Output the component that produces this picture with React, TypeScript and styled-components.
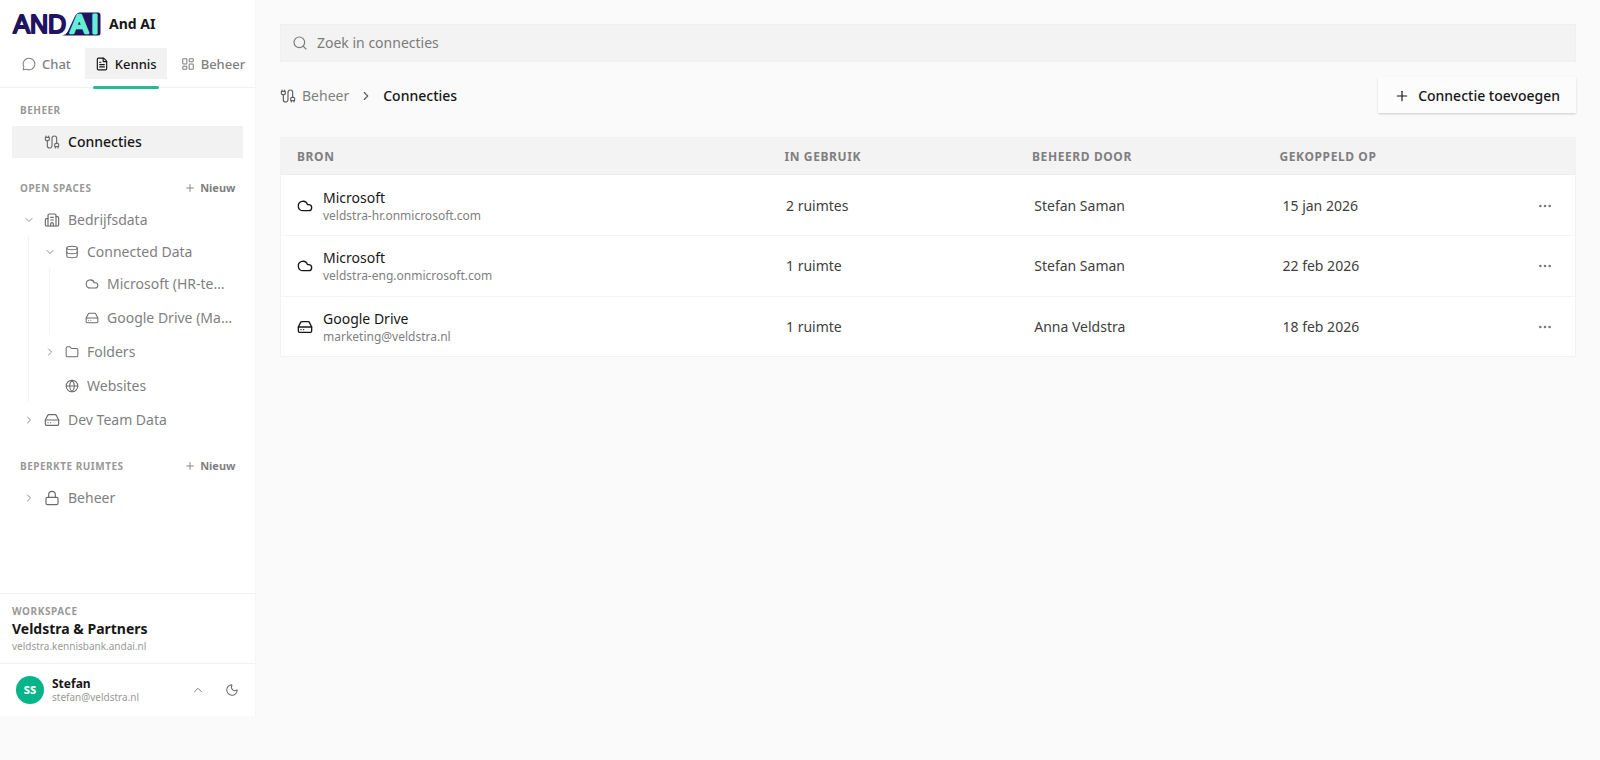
import React from "react";
import styled, { createGlobalStyle } from "styled-components";
import {
  Building2,
  Cable,
  ChevronDown,
  ChevronRight,
  ChevronUp,
  Cloud,
  Database,
  Ellipsis,
  FileText,
  Folder,
  Globe,
  HardDrive,
  LayoutDashboard,
  Lock,
  MessageCircle,
  Moon,
  Plus,
  Search,
  type LucideIcon,
} from "lucide-react";

const GlobalStyle = createGlobalStyle`
  * { box-sizing: border-box; }
  body {
    margin: 0;
    background: #fafafa;
    color: #171717;
    font-family: "Noto Sans", sans-serif;
    font-size: 14px;
    line-height: 20px;
  }
  button { font: inherit; color: inherit; border: 0; background: none; padding: 0; }
  svg { flex-shrink: 0; display: block; }
`;

const Page = styled.div`
  display: flex;
  align-items: flex-start;
  min-height: 760px;
`;

const Sidebar = styled.aside`
  width: 256px;
  height: 716px;
  flex-shrink: 0;
  display: flex;
  flex-direction: column;
  background: #fff;
  border-right: 1px solid #f5f5f5;
`;

const Brand = styled.div`
  display: flex;
  align-items: center;
  gap: 8px;
  height: 48px;
  padding: 0 12px;
  font-weight: 700;
`;

const Tabs = styled.nav`
  display: flex;
  height: 40px;
  padding: 0 0 0 12px;
  gap: 4px;
  border-bottom: 1px solid #f2f2f2;
`;

const Tab = styled.button<{ $active?: boolean }>`
  position: relative;
  display: flex;
  align-items: center;
  gap: 6px;
  height: 31px;
  padding: 0 10px;
  font-size: 13px;
  font-weight: 500;
  white-space: nowrap;
  color: ${(p) => (p.$active ? "#171717" : "#7f7f7f")};
  background: ${(p) => (p.$active ? "#f2f2f2" : "transparent")};
  &::after {
    content: "";
    display: ${(p) => (p.$active ? "block" : "none")};
    position: absolute;
    left: 8px;
    right: 8px;
    bottom: -10px;
    height: 3px;
    border-radius: 2px;
    background: #2bb898;
  }
`;

const Navigation = styled.div`
  flex: 1;
  padding: 12px 12px 0;
`;

const Section = styled.section`
  margin-bottom: 20px;
`;

const SectionHead = styled.div`
  display: flex;
  align-items: center;
  justify-content: space-between;
  height: 20px;
  padding: 0 7.5px 0 8px;
  margin-bottom: 6px;
`;

const Caption = styled.span<{ $wide?: boolean }>`
  font-size: 10px;
  line-height: 16px;
  font-weight: 700;
  letter-spacing: ${(p) => (p.$wide ? 0.55 : 0.5)}px;
  color: #999;
`;

const NewButton = styled.button`
  display: flex;
  align-items: center;
  gap: 4px;
  font-size: 11px;
  font-weight: 700;
  color: #7f7f7f;
`;

const Item = styled.div<{ $active?: boolean }>`
  display: flex;
  align-items: center;
  height: 32px;
  padding: 0 8px;
  font-weight: ${(p) => (p.$active ? 500 : 400)};
  background: ${(p) => (p.$active ? "#f2f2f2" : "transparent")};
  color: ${(p) => (p.$active ? "#171717" : "#7f7f7f")};
  svg { color: #6b6b6b; }
`;

const Toggle = styled.span`
  display: flex;
  flex-shrink: 0;
  justify-content: center;
  width: 18px;
  margin-right: 6px;
  svg { color: #7b7b7b; }
`;

const ItemLabel = styled.span`
  margin-left: 8px;
  white-space: nowrap;
`;

const Branch = styled.div<{ $inset: number }>`
  display: flex;
  flex-direction: column;
  gap: 2px;
  margin-left: 16px;
  padding-left: ${(p) => p.$inset}px;
  border-left: 1px solid #f4f4f4;
`;

const Stack = styled.div`
  display: flex;
  flex-direction: column;
  gap: 2px;
`;

const Workspace = styled.div`
  height: 70px;
  padding: 9px 12px 0;
  border-top: 1px solid #f2f2f2;
`;

const WorkspaceName = styled.div`
  margin-bottom: 1px;
  font-weight: 700;
  line-height: 19px;
`;

const SmallText = styled.div`
  font-size: 10px;
  line-height: 15px;
  color: #999;
`;

const User = styled.div`
  display: flex;
  align-items: center;
  height: 53px;
  padding: 0 16px;
  border-top: 1px solid #f2f2f2;
  svg { color: #6b6b6b; }
`;

const Avatar = styled.div`
  display: grid;
  place-items: center;
  width: 28px;
  height: 28px;
  margin-right: 8px;
  border-radius: 50%;
  background: #05b488;
  color: #fff;
  font-size: 11px;
  font-weight: 800;
`;

const UserInfo = styled.div`
  flex: 1;
  padding-top: 1px;
`;

const UserName = styled.div`
  font-size: 12px;
  line-height: 13px;
  font-weight: 700;
`;

const UserActions = styled.div`
  display: flex;
  align-items: center;
  gap: 20px;
`;

const Main = styled.main`
  flex: 1;
  padding: 24px;
`;

const SearchBox = styled.label`
  display: flex;
  align-items: center;
  gap: 9px;
  height: 38px;
  padding: 0 11px;
  border: 1px solid #f0f0f0;
  background: #f3f3f3;
  color: #7b7b7b;
`;

const Toolbar = styled.div`
  display: flex;
  align-items: center;
  justify-content: space-between;
  height: 36px;
  margin: 15.5px 0 23.5px;
`;

const Crumbs = styled.div`
  display: flex;
  align-items: center;
  color: #7f7f7f;
  svg { color: #5f5f5f; }
`;

const CrumbParent = styled.span`
  margin: 0 10px 0 6px;
`;

const CrumbCurrent = styled.span`
  margin-left: 10px;
  font-weight: 500;
  color: #171717;
`;

const AddButton = styled.button`
  display: flex;
  align-items: center;
  gap: 8px;
  height: 36px;
  padding: 1px 16px 0;
  margin-bottom: 1px;
  font-weight: 500;
  background: #fcfcfc;
  box-shadow: 0 1px 2px rgba(0, 0, 0, 0.14), 0 2px 3px -1px rgba(0, 0, 0, 0.06);
`;

const Table = styled.div`
  border: 1px solid #f2f2f2;
  background: #fff;
`;

const Row = styled.div`
  display: grid;
  grid-template-columns: 487px 248.25px 248.25px 1fr 28px;
  align-items: center;
  height: 60.75px;
  padding: 1px 16px 0;
  border-bottom: 1px solid #f4f4f4;
  color: #404040;
  &:last-child { height: 59.5px; border-bottom: 0; }
`;

const HeadRow = styled(Row)`
  grid-template-columns: 487.5px 247.5px 247.5px 1fr 28px;
  height: 37.35px;
  background: #f3f3f3;
  border-bottom-color: #eee;
  color: #7f7f7f;
  font-size: 12px;
  font-weight: 700;
  letter-spacing: 0.6px;
`;

const Cell = styled.span`
  padding-left: 2px;
`;

const Source = styled.div`
  display: flex;
  align-items: center;
  gap: 10px;
  color: #171717;
`;

const SourceText = styled.div`
  padding-top: 1px;
`;

const SourceName = styled.div`
  line-height: 18px;
`;

const SourceDetail = styled.div`
  font-size: 12px;
  line-height: 17px;
  color: #7f7f7f;
`;

const More = styled.button`
  display: grid;
  place-items: center;
  width: 28px;
  height: 28px;
  color: #7b7b7b;
`;

const LogoMark = styled.svg`
  overflow: visible;
  font-family: "Liberation Sans", sans-serif;
  font-weight: 400;
  line-height: 1;
  stroke-linejoin: round;
  stroke-linecap: round;
`;

const Logo = () => (
  <LogoMark width="89" height="24" viewBox="0 0 89 24" aria-label="AND AI">
    <text x="1.2" y="20.500" fontSize="25" textLength="53" lengthAdjust="spacingAndGlyphs" fill="#20135f" stroke="#20135f" strokeWidth="2">AND</text>
    <path
      d="M68 .5H86Q88.500.5 88.500 3V21Q88.500 23.500 86 23.500H50Q54 23 56 19L63 4Q65 .5 68 .5Z"
      fill="#20135f"
      stroke="#fff"
      strokeWidth="1.200"
      paintOrder="stroke"
    />
    <text x="58.500" y="20.500" fontSize="25" textLength="17.500" lengthAdjust="spacingAndGlyphs" fill="#65eed5" stroke="#65eed5" strokeWidth="2.600">A</text>
    <text x="79.500" y="20.500" fontSize="25" fill="#65eed5" stroke="#65eed5" strokeWidth="2.800">I</text>
  </LogoMark>
);

type TreeItemProps = {
  icon: LucideIcon;
  label: string;
  state?: "open" | "closed";
  active?: boolean;
  size?: number;
};

const TreeItem = ({ icon: Icon, label, state, active, size = 16 }: TreeItemProps) => (
  <Item $active={active}>
    <Toggle>
      {state === "open" && <ChevronDown size={12} strokeWidth={1.75} />}
      {state === "closed" && <ChevronRight size={12} strokeWidth={1.75} />}
    </Toggle>
    <Icon size={size} strokeWidth={1.75} />
    <ItemLabel>{label}</ItemLabel>
  </Item>
);

const New = () => (
  <NewButton>
    <Plus size={12} strokeWidth={1.75} />
    Nieuw
  </NewButton>
);

const connections = [
  { icon: Cloud, name: "Microsoft", detail: "veldstra-hr.onmicrosoft.com", use: "2 ruimtes", owner: "Stefan Saman", date: "15 jan 2026" },
  { icon: Cloud, name: "Microsoft", detail: "veldstra-eng.onmicrosoft.com", use: "1 ruimte", owner: "Stefan Saman", date: "22 feb 2026" },
  { icon: HardDrive, name: "Google Drive", detail: "marketing@veldstra.nl", use: "1 ruimte", owner: "Anna Veldstra", date: "18 feb 2026" },
];

export default function App() {
  return (
    <Page>
      <GlobalStyle />
      <Sidebar>
        <Brand>
          <Logo />
          And AI
        </Brand>
        <Tabs>
          <Tab><MessageCircle size={14} strokeWidth={1.75} />Chat</Tab>
          <Tab $active><FileText size={14} />Kennis</Tab>
          <Tab><LayoutDashboard size={14} strokeWidth={1.75} />Beheer</Tab>
        </Tabs>
        <Navigation>
          <Section>
            <SectionHead><Caption>BEHEER</Caption></SectionHead>
            <TreeItem icon={Cable} label="Connecties" active />
          </Section>
          <Section>
            <SectionHead><Caption>OPEN SPACES</Caption><New /></SectionHead>
            <Stack>
              <div>
                <TreeItem icon={Building2} label="Bedrijfsdata" state="open" />
                <Branch $inset={4}>
                  <div>
                    <TreeItem icon={Database} label="Connected Data" state="open" size={14} />
                    <Branch $inset={3}>
                      <TreeItem icon={Cloud} label="Microsoft (HR-te…" size={14} />
                      <TreeItem icon={HardDrive} label="Google Drive (Ma…" size={14} />
                    </Branch>
                  </div>
                  <TreeItem icon={Folder} label="Folders" state="closed" size={14} />
                  <TreeItem icon={Globe} label="Websites" size={14} />
                </Branch>
              </div>
              <TreeItem icon={HardDrive} label="Dev Team Data" state="closed" />
            </Stack>
          </Section>
          <Section>
            <SectionHead><Caption>BEPERKTE RUIMTES</Caption><New /></SectionHead>
            <TreeItem icon={Lock} label="Beheer" state="closed" />
          </Section>
        </Navigation>
        <Workspace>
          <Caption as="div" $wide>WORKSPACE</Caption>
          <WorkspaceName>Veldstra &amp; Partners</WorkspaceName>
          <SmallText>veldstra.kennisbank.andai.nl</SmallText>
        </Workspace>
        <User>
          <Avatar>SS</Avatar>
          <UserInfo>
            <UserName>Stefan</UserName>
            <SmallText>stefan@veldstra.nl</SmallText>
          </UserInfo>
          <UserActions>
            <ChevronUp size={14} strokeWidth={1.5} />
            <Moon size={14} strokeWidth={1.75} />
          </UserActions>
        </User>
      </Sidebar>
      <Main>
        <SearchBox>
          <Search size={16} strokeWidth={1.75} />
          Zoek in connecties
        </SearchBox>
        <Toolbar>
          <Crumbs>
            <Cable size={16} strokeWidth={1.75} />
            <CrumbParent>Beheer</CrumbParent>
            <ChevronRight size={14} />
            <CrumbCurrent>Connecties</CrumbCurrent>
          </Crumbs>
          <AddButton>
            <Plus size={16} strokeWidth={1.75} />
            Connectie toevoegen
          </AddButton>
        </Toolbar>
        <Table>
          <HeadRow>
            <span>BRON</span>
            <span>IN GEBRUIK</span>
            <span>BEHEERD DOOR</span>
            <span>GEKOPPELD OP</span>
          </HeadRow>
          {connections.map(({ icon: Icon, name, detail, use, owner, date }) => (
            <Row key={detail}>
              <Source>
                <Icon size={16} />
                <SourceText>
                  <SourceName>{name}</SourceName>
                  <SourceDetail>{detail}</SourceDetail>
                </SourceText>
              </Source>
              <Cell>{use}</Cell>
              <Cell>{owner}</Cell>
              <Cell>{date}</Cell>
              <More><Ellipsis size={16} /></More>
            </Row>
          ))}
        </Table>
      </Main>
    </Page>
  );
}
